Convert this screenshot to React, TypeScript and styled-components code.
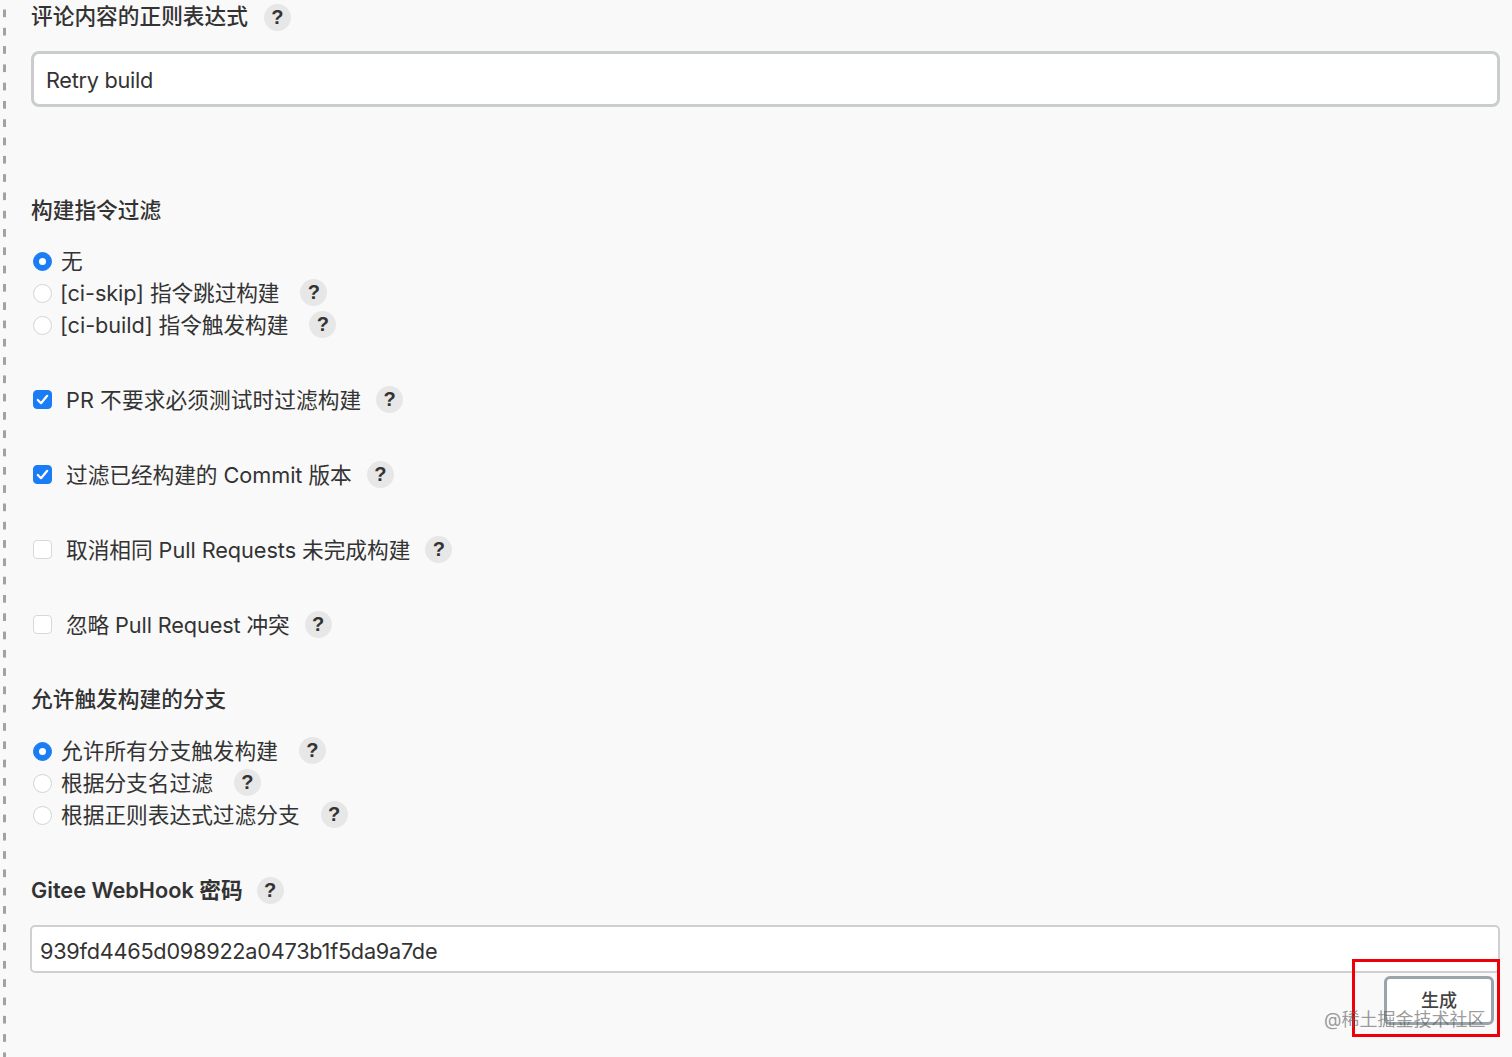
import React from "react";
import styled, { createGlobalStyle } from "styled-components";

const Global = createGlobalStyle`
  html, body { margin: 0; padding: 0; height: 1057px; overflow: hidden; background: #f9f9f9; }
  body { font-family: Inter, "Noto Sans CJK SC", sans-serif; color: #333; font-size: 21.7px; }
  * { box-sizing: border-box; }
`;

const Page = styled.div`
  position: relative;
  display: flex;
  width: 1512px;
  height: 1057px;
  overflow: hidden;
  background: #f9f9f9;
`;

const Rail = styled.div`
  flex: 0 0 3px;
  margin-left: 3px;
  height: 100%;
  background-image: linear-gradient(to bottom, #a2a2a2 0, #a2a2a2 7.5px, transparent 7.5px);
  background-size: 3px 18.3px;
  background-position: 0 9.5px;
`;

const Main = styled.main`
  flex: 0 0 1468px;
  margin-left: 25px;
  display: flex;
  flex-direction: column;
`;

const Title = styled.div<{ $bold?: boolean; $gap?: number }>`
  display: flex;
  align-items: center;
  height: ${(p) => (p.$bold ? 32 : 34)}px;
  gap: ${(p) => (p.$bold ? 14 : 16)}px;
  font-weight: ${(p) => (p.$bold ? 600 : 500)};
  line-height: 32px;
  white-space: nowrap;
  margin-top: ${(p) => p.$gap ?? 0}px;
`;

const RowText = styled.span<{ $track?: number }>`
  margin-bottom: 2px;
  letter-spacing: ${(p) => p.$track ?? 0}px;
`;

const Heading = styled.div<{ $gap: number }>`
  height: 32px;
  line-height: 32px;
  font-weight: 500;
  margin-top: ${(p) => p.$gap}px;
`;

const Help = styled.span`
  flex: none;
  width: 27px;
  height: 27px;
  border-radius: 50%;
  background: #e7e7e7;
  color: #333;
  display: inline-flex;
  align-items: center;
  justify-content: center;
  font-family: "Liberation Sans", sans-serif;
  font-size: 20px;
  font-weight: 700;
  line-height: 1;
`;

const BigInput = styled.input`
  display: block;
  width: 100%;
  height: 56px;
  margin-top: 17px;
  padding: 1px 12px 0;
  border: 3px solid #c9cdcc;
  border-radius: 8px;
  background: #fff;
  color: #333;
  font: 400 21.7px Inter, "Noto Sans CJK SC", sans-serif;
  letter-spacing: -0.27px;
  outline: none;
`;

const KeyInput = styled.input`
  display: block;
  width: 1470px;
  height: 48px;
  margin: 19px 0 0 -1px;
  padding: 4px 8px 0;
  border: 2px solid #d0d0d0;
  border-radius: 5px;
  background: #fff;
  color: #333;
  font: 400 21.7px Inter, "Noto Sans CJK SC", sans-serif;
  letter-spacing: -0.25px;
  outline: none;
`;

const RadioGroup = styled.div<{ $gap: number }>`
  display: flex;
  flex-direction: column;
  margin-top: ${(p) => p.$gap}px;
`;

const RadioRow = styled.label`
  display: flex;
  align-items: center;
  height: 32px;
  padding-left: 2px;
  white-space: nowrap;
`;

const RadioMark = styled.span<{ $on?: boolean; $pull?: boolean }>`
  flex: none;
  width: 19px;
  height: 19px;
  margin-right: ${(p) => (p.$pull ? 8 : 9)}px;
  margin-top: 2px;
  border-radius: 50%;
  background: ${(p) => (p.$on ? "#1a7df5" : "#fff")};
  border: 1px solid ${(p) => (p.$on ? "#1a7df5" : "#d4d4d4")};
  display: flex;
  align-items: center;
  justify-content: center;
  &::after {
    content: "";
    display: ${(p) => (p.$on ? "block" : "none")};
    width: 7px;
    height: 7px;
    border-radius: 50%;
    background: #fff;
  }
`;

const RadioHelp = styled.span`
  display: inline-flex;
  margin-left: 21px;
`;

const CheckRow = styled.label`
  display: flex;
  align-items: center;
  height: 32px;
  margin-top: 43px;
  padding-left: 2px;
  white-space: nowrap;
`;

const CheckBox = styled.span<{ $on?: boolean }>`
  flex: none;
  width: 19px;
  height: 19px;
  margin-right: 14px;
  border-radius: 4px;
  background: ${(p) => (p.$on ? "#1a7df5" : "#fff")};
  border: 1px solid ${(p) => (p.$on ? "#1a7df5" : "#d8d8d8")};
  display: flex;
  align-items: center;
  justify-content: center;
`;

const CheckHelp = styled.span`
  display: inline-flex;
  margin-left: 15px;
`;

const ButtonRow = styled.div`
  display: flex;
  justify-content: flex-end;
  padding-right: 6px;
  margin-top: 3px;
`;

const Generate = styled.button`
  width: 110px;
  height: 49px;
  border: 3px solid #9aa5ab;
  border-radius: 6px;
  background: #fff;
  color: #444;
  font: 500 18px Inter, "Noto Sans CJK SC", sans-serif;
  padding: 0 0 3px;
`;

const RedFrame = styled.div`
  position: absolute;
  left: 1352px;
  top: 959px;
  width: 148px;
  height: 78px;
  border: 3px solid #ee0008;
  pointer-events: none;
`;

const Watermark = styled.div`
  position: absolute;
  left: 1324px;
  top: 1007px;
  font-size: 18px;
  line-height: 26px;
  color: rgba(90, 90, 90, 0.62);
  white-space: nowrap;
  pointer-events: none;
`;

const Tick = () => (
  <svg width="15" height="15" viewBox="0 0 15 15" fill="none" aria-hidden="true">
    <path d="M2.8 8 L6 11.2 L12.2 3.8" stroke="#fff" strokeWidth="2.2" strokeLinecap="round" strokeLinejoin="round" />
  </svg>
);

const Radio = ({ on, label, help, track }: { on?: boolean; label: string; help?: boolean; track?: number }) => (
  <RadioRow>
    <RadioMark $on={on} $pull={track !== undefined} />
    <RowText $track={track}>{label}</RowText>
    {help && (
      <RadioHelp>
        <Help>?</Help>
      </RadioHelp>
    )}
  </RadioRow>
);

const Check = ({ on, label, track }: { on?: boolean; label: string; track?: number }) => (
  <CheckRow>
    <CheckBox $on={on}>{on && <Tick />}</CheckBox>
    <RowText $track={track}>{label}</RowText>
    <CheckHelp>
      <Help>?</Help>
    </CheckHelp>
  </CheckRow>
);

export default function App() {
  return (
    <Page>
      <Global />
      <Rail />
      <Main>
        <Title>
          <RowText>评论内容的正则表达式</RowText>
          <Help>?</Help>
        </Title>
        <BigInput readOnly value="Retry build" />

        <Heading $gap={87}>构建指令过滤</Heading>
        <RadioGroup $gap={18}>
          <Radio on label="无" />
          <Radio label="[ci-skip] 指令跳过构建" help track={-0.1} />
          <Radio label="[ci-build] 指令触发构建" help track={-0.06} />
        </RadioGroup>

        <Check on label="PR 不要求必须测试时过滤构建" track={0.07} />
        <Check on label="过滤已经构建的 Commit 版本" track={-0.05} />
        <Check label="取消相同 Pull Requests 未完成构建" track={-0.05} />
        <Check label="忽略 Pull Request 冲突" track={-0.12} />

        <Heading $gap={43}>允许触发构建的分支</Heading>
        <RadioGroup $gap={19}>
          <Radio on label="允许所有分支触发构建" help />
          <Radio label="根据分支名过滤" help />
          <Radio label="根据正则表达式过滤分支" help />
        </RadioGroup>

        <Title $bold $gap={44}>
          Gitee WebHook 密码
          <Help>?</Help>
        </Title>
        <KeyInput readOnly value="939fd4465d098922a0473b1f5da9a7de" />
        <ButtonRow>
          <Generate type="button">生成</Generate>
        </ButtonRow>
      </Main>
      <RedFrame />
      <Watermark>@稀土掘金技术社区</Watermark>
    </Page>
  );
}
